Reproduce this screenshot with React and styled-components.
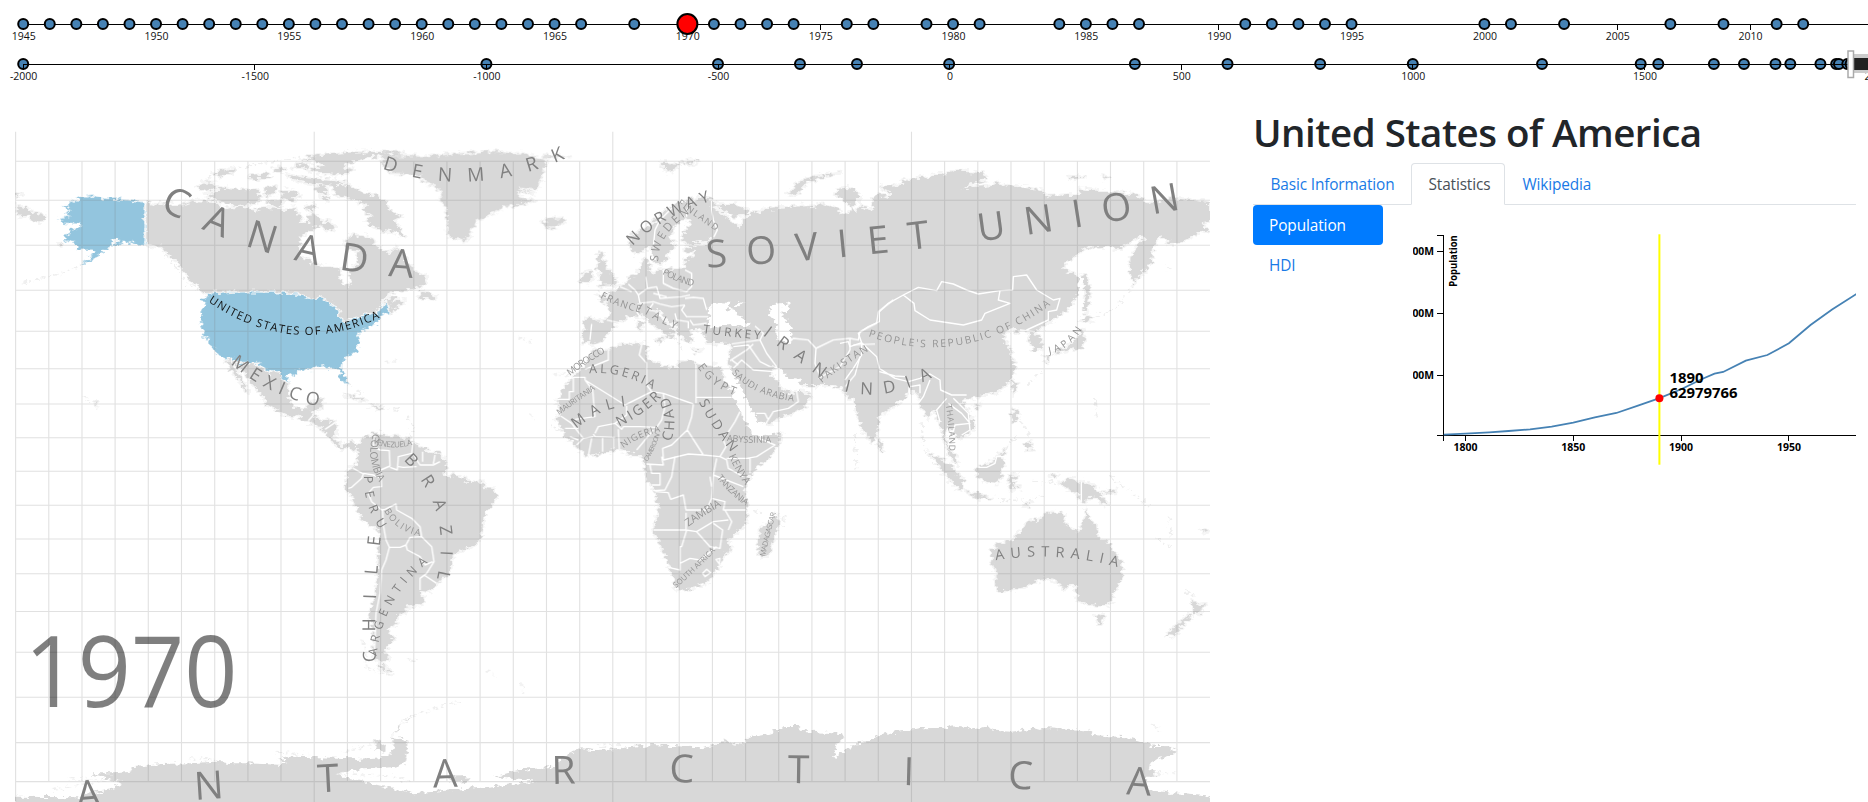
import React from "react";
import styled, { createGlobalStyle } from "styled-components";

const GlobalStyle = createGlobalStyle`
  * { box-sizing: border-box; }
  body {
    margin: 0;
    background: #fff;
    color: #212529;
    font-family: "Open Sans", "Noto Sans", sans-serif;
    overflow: hidden;
  }
`;

const Page = styled.div`
  height: 802px;
  display: flex;
  flex-direction: column;
  overflow: hidden;
`;

const TimelineBar = styled.header`
  flex: 0 0 131px;
`;

const TimelineSvg = styled.svg`
  display: block;
  width: 1868px;
  height: 131px;
`;

const Axis = styled.path`
  fill: none;
  stroke: #000;
  stroke-width: 1;
  shape-rendering: crispEdges;
`;

const AxisLabel = styled.text`
  font-size: 10.5px;
  fill: #111;
  text-anchor: middle;
`;

const EventDot = styled.circle`
  fill: ${(p) => (p.$active ? "#f00" : "steelblue")};
  stroke: #000;
  stroke-width: 2;
`;

const Main = styled.main`
  flex: 1;
  min-height: 0;
  display: grid;
  grid-template-columns: 1196px 603px;
  column-gap: 42px;
  padding-left: 15px;
`;

const MapSvg = styled.svg`
  display: block;
  width: 1196px;
  height: 671px;
`;

const Halo = styled.path`
  fill: none;
  stroke: #f5f5f5;
  stroke-width: 11;
  stroke-linejoin: round;
`;

const Land = styled.path`
  fill: ${(p) => (p.$selected ? "#93c5de" : "#d8d8d8")};
`;

const Sea = styled.path`
  fill: #fff;
`;

const Faint = styled.path`
  fill: none;
  stroke: #efefef;
  stroke-width: 6;
  stroke-dasharray: 14 9 5 12;
`;

const Border = styled.path`
  fill: none;
  stroke: #fff;
  stroke-width: 4.2;
  stroke-linejoin: round;
`;

const GridLine = styled.path`
  fill: none;
  stroke: #777;
  stroke-opacity: 0.22;
  stroke-width: 1.1;
`;

const labelColor = (p) => {
  if (p.$selected) return "#111";
  return p.$minor ? "#959595" : "#808080";
};

const CountryText = styled.text`
  fill: ${labelColor};
`;

const YearText = styled.text`
  font-size: 99px;
  fill: #000;
  fill-opacity: 0.5;
`;

const Panel = styled.aside`
  display: flex;
  flex-direction: column;
  margin-top: -19px;
  min-width: 0;
`;

const Title = styled.h1`
  margin: 0;
  height: 51px;
  font-size: 38.5px;
  font-weight: 600;
  line-height: 41px;
  letter-spacing: -0.5px;
  white-space: nowrap;
`;

const Tabs = styled.nav`
  display: flex;
  height: 42px;
  border-bottom: 1px solid #dee2e6;
`;

const Tab = styled.a`
  width: ${(p) => p.$width}px;
  height: 42px;
  padding: 9px 0 0 16.5px;
  font-size: 15.4px;
  line-height: 24px;
  letter-spacing: -0.14px;
  white-space: nowrap;
  color: ${(p) => (p.$active ? "#495057" : "#1a7ae6")};
  background: ${(p) => (p.$active ? "#fff" : "transparent")};
  border-width: 1px;
  border-style: solid;
  border-color: ${(p) => (p.$active ? "#dee2e6 #dee2e6 #fff" : "transparent")};
  border-radius: 4px 4px 0 0;
`;

const TabBody = styled.section`
  display: flex;
  gap: 29.6px;
`;

const Pills = styled.nav`
  display: flex;
  flex-direction: column;
  flex: 0 0 130px;
`;

const Pill = styled.a`
  height: 40px;
  padding: 9px 16px 7px;
  border-radius: 4px;
  font-size: 15.4px;
  line-height: 24px;
  letter-spacing: -0.1px;
  color: ${(p) => (p.$active ? "#fff" : "#1a7ae6")};
  background: ${(p) => (p.$active ? "#007bff" : "transparent")};
`;

const ChartSvg = styled.svg`
  display: block;
  width: 443.4px;
  height: 280px;
  overflow: hidden;
`;

const ChartText = styled.text`
  font-size: ${(p) => p.$size || 10.5}px;
  font-weight: 700;
  fill: #000;
`;

const Trend = styled.path`
  fill: none;
  stroke: steelblue;
  stroke-width: 1.8;
`;

/* ---------- timelines ---------- */

const recentX = (y) => 23.2 + (y - 1945) * 26.567;
const longX = (y) => 23.2 + (y + 2000) * 0.4632;

const recentEvents = [
  ...Array.from({ length: 22 }, (_, i) => 1945 + i),
  1968, 1971, 1972, 1973, 1974, 1976, 1977, 1979, 1980, 1981, 1984, 1985, 1986, 1987,
  1991, 1992, 1993, 1994, 1995, 2000, 2001, 2003, 2007, 2009, 2011, 2012,
];
const recentTicks = Array.from({ length: 14 }, (_, i) => 1945 + i * 5);
const longEvents = [
  -2000, -1000, -500, -323, -200, -1, 400, 600, 800, 1000, 1279, 1492, 1530, 1650, 1715,
  1783, 1815, 1880, 1914, 1920, 1938, 1945,
];
const longTicks = Array.from({ length: 9 }, (_, i) => -2000 + i * 500);

function Timelines() {
  return (
    <TimelineBar>
      <TimelineSvg viewBox="0 0 1868 131">
        <Axis d={`M23 24.5H1868${recentTicks.map((t) => `M${recentX(t)} 24V30`).join("")}`} />
        {recentTicks.map((t) => (
          <AxisLabel key={t} x={recentX(t) + 0.5} y="40">{t}</AxisLabel>
        ))}
        {recentEvents.map((y) => (
          <EventDot key={y} cx={recentX(y)} cy="24" r="5" />
        ))}
        <EventDot $active cx={recentX(1970)} cy="24" r="10" />
        {longEvents.map((y) => (
          <EventDot key={y} cx={longX(y)} cy="64" r="5" />
        ))}
        <Axis d={`M23 70V64.5H1868${longTicks.map((t) => `M${longX(t)} 64V70`).join("")}`} />
        {longTicks.map((t) => (
          <AxisLabel key={t} x={longX(t) + 0.5} y="80">{t}</AxisLabel>
        ))}
        <rect x="1851" y="54" width="17" height="19" fill="#ccc" />
        <rect x="1853" y="58" width="15" height="12" fill="#222" />
        <rect x="1848" y="51" width="5.5" height="26.5" fill="#fff" stroke="#aaa" strokeWidth="1.5" />
      </TimelineSvg>
    </TimelineBar>
  );
}

/* ---------- map ---------- */

/* Each sheet is digitised at three units per pixel from its own origin. */
const sheets = {
  america: [0, 120],
  greenland: [340, 120],
  europe: [560, 120],
  asia: [840, 120],
  south: [320, 410],
  africa: [540, 330],
  oceania: [840, 330],
};

const sheetTransform = (s) => `translate(${sheets[s][0]} ${sheets[s][1]}) scale(0.33333)`;

const land = [
  ["america", "M438 247L470 255 495 250 520 258 545 256 580 243 610 245 650 250 665 262 680 268 700 262 750 262 765 280 775 268 790 263 830 266 860 271 880 264 900 285 905 300 895 310 925 305 925 285 945 282 965 300 960 320 940 325 925 338 905 345 898 365 896 395 905 412 940 430 965 438 990 440 1018 448 1022 465 1015 478 1032 496 1046 500 1055 485 1050 455 1070 435 1078 415 1074 395 1040 385 1035 365 1060 345 1100 350 1122 362 1125 375 1145 385 1150 398 1170 398 1185 385 1205 392 1215 410 1215 430 1245 445 1250 458 1280 470 1275 490 1240 507 1190 510 1165 522 1148 535 1142 552 1165 535 1185 530 1180 545 1215 540 1195 558 1170 578 1160 548 1145 550 1135 575 1100 582 1060 595 1030 602 1020 600 1015 570 985 545 960 533 935 535 895 522 820 517 740 515 680 518 620 522 605 512 595 500 575 485 562 462 548 448 536 428 520 415 500 395 490 382 460 376 438 372Z"],
  ["america", "M675 720L700 717 720 732 770 729 790 742 810 760 820 752 835 757 850 782 865 790 864 820 870 850 885 865 915 868 935 845 968 838 968 855 955 870 935 875 945 895 975 900 1005 905 1008 940 1000 950 1012 968 1030 978 1050 968 1072 982 1065 990 1050 980 1030 988 1008 975 985 948 965 925 940 912 920 905 900 890 870 888 830 870 795 850 788 825 760 795 740 765 715 737 700 727Z"],
  ["america", "M678 722L692 722 705 745 720 770 745 815 735 812 722 785 708 775 700 755 685 738Z"],
  ["america", "M593 205L610 188 645 187 650 200 620 215ZM622 232L640 212 665 205 700 210 730 205 745 225 760 215 785 228 770 245 720 258 695 252 660 245 640 238ZM640 160L700 145 700 158 660 168ZM750 165L800 160 815 172 780 178 750 175ZM735 215L770 205 775 218 745 225ZM795 205L830 195 825 220 800 228ZM845 215L875 210 900 225 880 240 850 235ZM800 245L850 240 840 258 810 255ZM818 150L850 140 855 150 835 158ZM860 165L920 175 1000 180 1035 190 1000 198 930 190 880 180ZM880 145L900 130 930 132 920 145ZM905 118L960 105 1050 98 1130 96 1210 98 1170 108 1100 112 1060 125 1025 140 1060 150 1030 162 960 160 925 150 970 140 960 125ZM945 200L975 195 985 215 955 222ZM1000 200L1050 195 1075 215 1120 225 1160 250 1165 270 1205 290 1180 300 1195 318 1215 350 1180 335 1150 330 1120 320 1095 305 1115 285 1090 270 1100 255 1065 240 1035 232 1005 222ZM960 312L990 305 1005 325 980 332ZM965 232L985 228 980 245ZM920 255L945 258 940 275 918 270Z"],
  ["america", "M50 258L80 265 100 280 140 288 130 302 108 305 85 290 50 285ZM50 222L70 224 50 227ZM1255 535L1265 515 1290 520 1310 530 1300 540ZM1030 823L1060 828 1100 842 1070 838ZM1110 855L1150 862 1140 868ZM286 852L294 856 290 860ZM176 373L190 370 188 377Z"],
  ["greenland", "M125 120L175 110 215 108 250 112 300 106 380 100 460 94 500 100 560 102 595 115 620 122 610 150 600 165 605 180 590 205 535 200 550 212 585 218 530 215 540 235 582 240 540 255 492 258 470 275 435 288 410 305 392 330 388 350 375 363 360 355 335 355 322 335 325 305 318 280 322 265 300 240 308 220 285 200 255 185 240 170 200 160 150 158ZM608 305L632 295 668 292 672 305 640 326 615 320ZM140 100L200 105 130 115ZM605 108L690 110 620 115Z"],
  ["south", "M0 30L45 35 48 72 20 45 0 40ZM110 110L130 85 155 72 175 68 190 78 235 80 262 84 275 95 300 110 330 125 355 130 375 155 380 180 362 200 395 202 395 192 440 212 480 215 500 235 522 238 530 255 525 275 500 300 490 320 488 350 478 390 460 408 425 420 395 440 392 480 370 500 350 520 330 545 305 540 300 548 312 565 306 582 258 590 255 610 232 612 230 640 210 650 205 665 222 685 200 712 192 730 208 745 185 755 165 750 160 700 165 660 147 620 155 590 165 560 172 520 175 470 178 420 182 370 170 355 128 332 115 300 95 260 78 235 80 210 85 178 100 173 112 160 115 130ZM180 762L195 768 195 782 180 775ZM200 775L218 790 200 790Z"],
  ["africa", "M160 60L205 62 240 45 310 42 325 45 318 70 325 90 370 110 410 115 420 95 450 92 470 105 500 110 540 108 548 125 545 140 580 190 595 235 600 250 625 290 640 305 655 320 725 308 722 330 690 380 650 410 628 440 612 465 616 500 622 520 620 572 605 595 565 625 572 660 545 680 540 705 510 745 490 765 450 775 415 782 405 770 400 740 380 690 365 650 340 600 355 550 355 530 345 485 318 440 315 400 300 375 270 374 260 362 235 356 200 365 180 372 145 378 115 355 85 325 65 300 62 282 50 268 60 240 52 210 65 185 85 160 100 140 130 115 148 85ZM712 550L718 580 700 630 685 675 665 682 652 660 660 632 658 600 690 575Z"],
  ["africa", "M580 40L660 40 685 70 690 120 705 150 718 168 728 182 760 190 775 170 785 182 812 198 795 232 745 252 680 285 652 290 645 262 625 225 600 190 582 150 562 125 578 90Z"],
  ["europe", "M455 240L440 236 410 233 380 243 340 258 300 285 275 315 240 335 212 348 205 375 225 400 255 388 270 378 278 400 285 428 302 430 318 420 325 395 345 380 328 350 345 315 370 292 395 300 390 318 370 340 367 362 385 372 435 363 462 350 430 378 378 382 372 388 385 400 405 395 403 412 378 418 375 440 360 450 310 448 285 458 262 452 272 435 255 415 240 440 232 465 212 468 198 490 175 500 170 515 145 514 142 528 112 522 125 540 145 550 150 570 145 595 115 602 75 595 72 640 68 665 85 662 100 673 125 665 140 640 165 620 160 608 190 605 200 590 215 588 235 590 250 582 265 605 300 628 322 645 335 640 350 635 325 615 295 590 288 570 305 575 322 600 345 612 360 640 368 658 385 668 400 660 385 640 400 628 430 622 436 650 440 668 470 670 495 668 515 678 510 705 505 735 560 740 620 745 650 745 668 765 700 780 722 795 760 795 820 795 850 810 868 838 885 832 890 870 900 900V232L870 250 830 228 832 210 855 203 880 210 900 225 900 290 880 280 860 290 845 288 835 268 790 250 762 258 700 260 650 265 612 268 600 282 585 272 552 298 542 320 520 312 505 300 478 275 450 262 480 255 520 255 565 270 560 285 525 290 490 272Z"],
  ["europe", "M110 402L130 400 125 415 140 425 135 440 155 460 172 480 165 495 130 497 115 500 130 480 115 475 125 455 110 440 115 420ZM68 460L95 455 98 475 85 488 62 485ZM680 220L705 205 710 190 740 175 790 165 840 158 790 172 740 185 725 210 705 225ZM300 130L330 128 355 138 330 155 310 145ZM360 125L420 123 390 132ZM285 660L310 655 300 670ZM312 648L345 640 335 655ZM235 605L248 612 243 630 233 622ZM395 690L425 690 410 698Z"],
  ["asia", "M0 205L30 205 50 215 45 245 25 285 0 280V795L20 805 45 820 45 860 60 910 80 950 95 962 112 945 115 890 145 870 195 832 205 810 235 825 245 860 255 875 262 895 275 872 290 870 285 885 302 910 308 940 312 960 325 1000 352 1035 345 1005 325 985 315 940 322 920 345 940 365 955 375 945 402 930 402 900 380 870 362 845 380 835 410 830 430 825 470 815 500 795 520 765 527 740 510 715 515 695 488 655 495 635 520 620 530 640 550 630 575 640 568 655 580 690 605 690 605 660 585 635 620 610 650 592 680 570 700 545 718 515 718 470 700 462 665 445 690 420 715 400 740 383 800 380 840 385 870 365 900 350 920 350 890 380 872 410 870 450 880 490 905 460 932 430 940 380 960 345 985 368 1015 370 1050 355 1085 332 1105 338 1085 310 1110 305 1110 250 1050 240 1000 235 925 252 910 235 870 222 800 215 722 208 720 225 680 225 625 230 605 210 560 205 520 200 470 190 440 198 367 205 400 188 440 180 430 160 370 155 355 150 320 160 270 170 190 180 185 195 120 200 130 208 150 215 150 235 115 222 95 240 102 270 60 258 45 280Z"],
  ["asia", "M728 470L740 465 750 510 740 575 730 570 735 515ZM738 585L762 595 745 605 722 600ZM728 625L735 655 720 685 690 690 650 698 640 695 680 680 705 665ZM612 705L630 710 622 728ZM685 170L735 172 700 178ZM790 168L812 173 795 178ZM515 785L530 790 522 825ZM405 855L422 853 410 867Z"],
  ["oceania", "M115 328L130 345 125 362 112 355ZM270 370L300 385 335 410 370 455 372 480 340 465 312 430 290 400ZM375 487L415 492 455 505 415 503ZM410 410L440 405 470 385 488 360 500 368 485 380 492 405 475 458 440 455 412 440ZM510 435L535 440 515 450 540 475 520 462 515 485 508 460ZM520 235L535 240 533 265 520 275 515 255ZM555 345L572 335 575 355 562 362ZM628 435L655 437 640 445ZM660 460L690 443 720 455 760 465 775 488 805 525 785 520 765 500 740 502 740 515 722 512 715 495 690 478ZM778 488L830 480 825 487ZM738 535L750 575 768 585 772 620 805 640 820 665 842 690 847 720 838 760 822 785 812 818 780 826 745 822 715 812 705 765 690 762 672 778 655 755 620 745 580 755 550 772 500 782 475 784 468 770 470 735 458 700 452 665 470 645 520 630 545 600 560 580 585 568 595 578 610 555 640 547 672 552 670 575 700 600 720 605 730 580ZM765 855L795 860 778 886ZM1055 812L1065 815 1072 825 1098 820 1080 845 1062 858ZM1045 855L1050 865 1020 895 1005 918 980 915 1010 885ZM1085 600L1100 603 1090 608ZM550 525L575 515 560 528Z"],
];

const unitedStates = [
  "M434 247L400 243 345 236 320 237 280 227 255 232 235 237 215 247 205 260 182 259 212 270 195 283 212 290 172 298 190 308 243 311 238 325 215 328 208 345 190 348 200 364 228 372 232 390 275 388 280 400 262 420 245 431 270 424 300 402 330 382 335 366 350 355 362 362 345 370 335 380 355 375 375 362 395 368 410 374 434 372Z",
  "M622 524L680 519 740 516 820 518 890 523 935 537 962 535 990 550 1015 572 1020 605 1035 607 1060 597 1100 584 1135 577 1148 550 1162 547 1166 575 1140 590 1128 610 1115 615 1110 625 1085 630 1070 648 1082 658 1070 670 1074 688 1040 712 1027 725 1025 745 1038 775 1038 795 1022 775 1018 752 1000 742 980 745 975 738 940 742 935 750 905 745 880 765 860 768 868 787 850 780 835 755 820 750 810 758 790 740 770 727 740 730 720 730 700 715 675 718 645 695 628 670 628 658 612 652 603 610 605 570 620 550 600 542 602 533 618 538Z",
];

const seas = [
  ["europe", "M440 612L448 590 440 568 455 555 480 550 512 552 498 565 525 573 538 590 578 612 545 622 510 612 480 618 455 625ZM515 558L552 545 535 562ZM624 572L640 555 688 550 690 572 665 575 665 592 690 610 700 628 690 635 697 668 670 670 650 650 648 615 635 595ZM640 742L660 745 690 775 718 780 722 795 720 815 705 810 680 800 655 765Z"],
  ["africa", "M545 112L572 112 592 150 622 215 655 275 730 312 660 318 640 308 600 245 578 190Z"],
  ["asia", "M715 465L728 470 728 590 715 600Z"],
];

const faint = [
  ["america", "M65 488L120 478 200 455 250 432M245 830L300 855M470 375L520 430 560 490 600 515M1040 785L1090 825M1140 865L1200 870M1225 890L1240 930 1225 955M620 175L760 135 900 110"],
  ["greenland", "M530 650L575 665M640 765L690 765M565 880L590 900M140 725L180 720"],
  ["asia", "M770 590L830 560 880 495M560 800L605 750M765 840L770 890M540 900L575 950M980 440L990 450"],
  ["oceania", "M245 280L250 350 280 395M480 510L550 512 620 495M580 455L650 460M810 440L850 470 930 530M985 560L995 620M950 625L990 650M1040 780L1060 800M45 310L50 430M495 360L530 310"],
  ["south", "M50 95L100 95M265 20L280 50M265 750L300 745M500 780L520 795M605 820L612 855M130 690L140 770 210 800"],
  ["africa", "M60 300L30 290M730 560L735 600M640 540L670 555M400 20L430 60"],
];

const borders = [
  ["america", "M436 246V372M925 902L945 880 945 870M975 928L1005 908"],
  ["south", "M85 235L95 232 125 205 130 192 100 175M165 75L160 110 180 120 208 122 210 168 182 180 185 230 160 232 145 250 155 275 185 300 195 298 228 282 230 300 275 325 300 350 305 380 270 382 258 405 240 412 208 412 198 390 190 345 188 300M130 190L160 195 185 205M210 172L232 180 235 140 275 130 280 95M278 130L300 165 340 165 360 155M308 125L308 155M345 135L340 162M235 170L250 172 290 170M258 405L262 420 300 440 315 465 338 455M305 380L335 410 342 455 320 490 300 505 300 540M312 495L350 520M208 412L198 450 185 480 180 550 168 610 165 690 162 750"],
  ["africa", "M135 118L205 90 205 62M305 45L298 75 320 100 320 165 335 185M135 150L255 225 335 185 370 190 460 222M468 105V220M468 202H575M135 150V142H100V185H88V208H52M135 150L158 180 165 260 105 268M62 258L95 280 110 300M115 295H75M165 310L175 290 225 280 260 255V228M225 280L245 298 250 290 300 290 350 292 365 270 375 230 370 190M225 322L165 320 160 312M110 300L130 325 160 320M188 320V365M130 325L110 345M155 325L145 378M220 320V358M235 298L238 358M340 300L290 360M90 320L115 330M460 222L455 260 442 300 395 345 368 355 370 390M442 300L490 375 540 380 558 350 550 330 585 275 600 245M370 390L445 372 490 375M318 402L370 405 365 380M330 405L335 430 360 430V465L335 465M405 380L395 440 375 480 340 482M345 485L385 488 392 508 430 495 438 540 455 540M540 380L560 390 565 415 610 440M530 385L520 435 610 470M520 435L515 505 555 515 550 540 618 540M515 505L500 540 455 540M438 548V600L340 600M438 600L470 605 520 575 565 570M440 600L425 650H420V720L385 712M420 700L450 685 480 690 530 650M470 605L510 650 540 655 548 600 520 580M555 540L575 575 565 600M488 730L500 718 512 728 495 740ZM528 688L540 685 538 702ZM560 385L620 385 650 380 705 345 650 322M630 385V430M510 440L515 470M580 50L625 45 660 95 690 110M580 115L605 90 640 120 700 125M672 290L700 245 745 235 775 215 770 185M648 250L675 250 685 270"],
  ["europe", "M455 240L455 270 460 300 472 330 462 350M405 235L380 270 380 290M338 262L300 300 285 330 280 380M310 448L310 490 340 505 380 515 395 500 395 460 375 450M258 470L262 505 290 500 300 535 365 530 390 525M262 505L235 525 240 550 280 545 300 552 335 560 375 555M280 520L320 530M205 492L225 510 235 525M180 500L215 515M375 535L400 532 430 535 440 570M375 555L365 570 380 590 445 590M280 550L265 570 295 575M345 580L350 600 385 605 385 625M390 600L400 615 440 610M95 612L90 660M140 600L185 610M235 550L230 575 240 590M585 618L610 640 600 660 515 672M600 660L620 700 650 740M510 722L560 690 580 672M535 735L515 720M690 665L700 655 745 660 768 685 765 730 780 770M768 685L820 660 870 655 870 690 840 740 775 775M870 655L895 660 900 635 950 610 955 575 1000 540M880 675L945 672M855 800L885 765 900 710"],
  ["asia", "M0 670L25 665 30 680 65 668 55 640 85 620 118 605 118 575 145 550 190 525 235 502 290 512 305 485 340 492 380 510 415 522 480 512 518 510 520 470 560 465 590 510 640 540 660 535 650 570 625 575 625 600 560 630M190 525L222 550 225 572 270 600 370 615 425 600 435 580 510 550 475 540 480 512M65 668L110 710 118 745 165 775 205 785 240 775 270 762 300 780 302 810 335 825 380 825M65 668L65 705 40 745 15 780M118 755L165 768 200 770M205 785L210 835M210 800L240 795 240 820M270 780L250 830 235 850M320 835L290 870 300 905M325 850L365 880 390 910 345 915 340 935M340 835L385 880 390 930 365 945M540 630L585 635"],
  ["oceania", "M415 412L440 412 465 400 470 380 495 380M724 455V515"],
];

const antarcticWest = "M39 606V590L200 592 230 580 265 572 305 555 310 550 225 520 290 520 330 515 335 502 410 492 480 490 545 485 590 490 620 490 720 495 725 488 705 478 730 470 800 472 890 475 900 480 960 475 990 460 998 435 990 412 1008 415 1030 425 1030 470 1025 490 990 502 890 510 850 525 920 545 1000 568 1045 580 1100 575 1200 565 1355 545 1250 530 1300 512 1400 500 1420 475 1470 445 1500 450 1575 448V606ZM950 415L975 435 970 455 950 450ZM992 410L1000 385 1030 355 1060 340 1020 365 1000 395ZM1130 530L1185 528 1180 543 1140 545Z";
const antarcticEast = "M-10 450L30 450 60 443 130 435 215 440 250 442 310 430 308 415 325 428 355 435 362 415 430 400 432 390 450 390 460 378 490 378 500 392 605 403 600 430 585 435 590 450 580 468 590 470 640 430 660 428 690 408 740 392 800 385 860 383 880 376 940 387 965 376 980 392 1025 395 1080 385 1095 390 1110 381 1220 392 1225 405 1310 412 1360 430 1375 438 1410 438 1435 455 1420 465 1390 475 1370 490 1365 510 1385 515 1375 530 1355 530 1360 570 1420 578 1518 590V606H-10Z";

const labels = [
  ["america", "CANADA", 39, [478, 266, 840, 409, 1242, 474]],
  ["europe", "SOVIET UNION", 38.5, [440, 443, 1150, 378, 1870, 267]],
  ["greenland", "DENMARK", 19, [127, 146, 400, 184, 678, 114]],
  ["america", "UNITED STATES OF AMERICA", 11.3, [625, 545, 880, 643, 1142, 592]],
  ["america", "MEXICO", 18, [691, 731, 814, 811, 956, 859]],
  ["europe", "MOROCCO", 9.5, [30, 768, 80, 731, 137, 697]],
  ["europe", "ALGERIA", 12.5, [88, 760, 185, 768, 278, 808]],
  ["africa", "MAURITANIA", 7.8, [57, 255, 112, 215, 167, 178]],
  ["africa", "MALI", 15, [108, 297, 180, 250, 258, 229]],
  ["africa", "NIGER", 14, [237, 290, 306, 250, 365, 202]],
  ["africa", "CHAD", 14, [392, 335, 403, 270, 385, 200]],
  ["africa", "SUDAN", 13.5, [476, 216, 520, 292, 574, 368]],
  ["africa", "EGYPT", 11.5, [472, 111, 520, 162, 584, 196]],
  ["africa", "KENYA", 10.5, [566, 378, 588, 422, 616, 466]],
  ["africa", "ABYSSINIA", 9, [560, 333, 625, 338, 694, 338]],
  ["africa", "NIGERIA", 9.3, [250, 355, 300, 325, 362, 305]],
  ["africa", "CAMEROON", 6.3, [322, 395, 342, 357, 360, 312]],
  ["africa", "TANZANIA", 9, [530, 443, 570, 488, 618, 527]],
  ["africa", "ZAMBIA", 10.8, [445, 590, 492, 558, 545, 527]],
  ["africa", "MADAGASCAR", 7.5, [675, 680, 690, 615, 708, 548]],
  ["africa", "SOUTH AFRICA", 7.8, [408, 775, 468, 720, 527, 662]],
  ["africa", "SAUDI ARABIA", 9.3, [575, 130, 655, 185, 762, 214]],
  ["europe", "TURKEY", 12, [428, 639, 515, 650, 602, 658]],
  ["europe", "IRAN", 17, [608, 645, 690, 706, 785, 776]],
  ["europe", "PAKISTAN", 10.3, [785, 790, 855, 737, 927, 692]],
  ["asia", "INDIA", 17, [12, 813, 140, 820, 278, 772]],
  ["asia", "PEOPLE'S REPUBLIC OF CHINA", 10.3, [85, 649, 365, 674, 634, 553]],
  ["asia", "JAPAN", 10, [628, 702, 682, 678, 726, 628]],
  ["oceania", "THAILAND", 8.5, [317, 225, 325, 290, 328, 364]],
  ["oceania", "AUSTRALIA", 14.5, [467, 691, 650, 681, 834, 712]],
  ["europe", "NORWAY", 16, [218, 378, 320, 300, 452, 243]],
  ["europe", "SWEDEN", 11.5, [294, 425, 320, 345, 390, 280]],
  ["europe", "FINLAND", 9, [352, 252, 410, 293, 468, 333]],
  ["europe", "POLAND", 9.2, [306, 462, 350, 483, 400, 499]],
  ["europe", "FRANCE", 10, [120, 533, 180, 560, 242, 578]],
  ["europe", "ITALY", 11, [232, 568, 288, 600, 347, 628]],
  ["south", "COLOMBIA", 10.3, [160, 70, 152, 145, 178, 217]],
  ["south", "VENEZUELA", 8, [158, 98, 215, 112, 278, 104]],
  ["south", "BRAZIL", 17, [250, 150, 350, 312, 350, 508]],
  ["south", "PERU", 12.5, [132, 197, 142, 280, 180, 358]],
  ["south", "BOLIVIA", 9.3, [192, 302, 236, 352, 300, 378]],
  ["south", "CHILE", 18, [168, 756, 168, 570, 183, 378]],
  ["south", "ARGENTINA", 12, [170, 738, 218, 580, 325, 457]],
];

/* Control point of the quadratic curve that passes through the label's middle. */
function curve([x0, y0, xm, ym, x1, y1]) {
  const cx = 2 * xm - (x0 + x1) / 2;
  const cy = 2 * ym - (y0 + y1) / 2;
  let length = 0;
  let px = x0;
  let py = y0;
  for (let i = 1; i <= 40; i++) {
    const t = i / 40;
    const x = (1 - t) * (1 - t) * x0 + 2 * t * (1 - t) * cx + t * t * x1;
    const y = (1 - t) * (1 - t) * y0 + 2 * t * (1 - t) * cy + t * t * y1;
    length += Math.hypot(x - px, y - py);
    px = x;
    py = y;
  }
  return { d: `M${x0} ${y0}Q${cx} ${cy} ${x1} ${y1}`, length };
}

function CurvedLabel({ id, text, size, points, selected, minor }) {
  const { d, length } = curve(points);
  return (
    <>
      <path id={id} d={d} fill="none" />
      <CountryText $selected={selected} $minor={minor} fontSize={size}>
        <textPath href={`#${id}`} textLength={length * 0.995} lengthAdjust="spacing">{text}</textPath>
      </CountryText>
    </>
  );
}

const parallels = [161.3, 200.3, 245.3, 290.3, 331.3, 368.7, 404, 437.7, 471.3, 505.3, 539, 573.7, 611.5, 652.3, 697.3, 742.6, 781.6];

const gridPath =
  parallels.map((y) => `M15.6 ${y}H1210`).join("") +
  Array.from({ length: 36 }, (_, i) => {
    const x = (15.6 + i * 33.18).toFixed(1);
    return i % 9 === 0 ? `M${x} 131.7V802` : `M${x} 161.3V781.6`;
  }).join("");

const layer = (list, Shape) =>
  list.map(([sheet, d], i) => <Shape key={i} d={d} transform={sheetTransform(sheet)} />);

function WorldMap() {
  return (
    <MapSvg viewBox="15 131 1196 671">
      <defs>
        {/* Ragged edge for the coastlines */}
        <filter id="coast" filterUnits="userSpaceOnUse" x="15" y="125" width="1196" height="690" colorInterpolationFilters="sRGB">
          <feTurbulence type="fractalNoise" baseFrequency="0.16 0.28" numOctaves="2" seed="7" result="noise" />
          <feDisplacementMap in="SourceGraphic" in2="noise" scale="9" xChannelSelector="R" yChannelSelector="G" />
        </filter>
        <clipPath id="sheet-edge">
          <path d="M15 125H1210V815H15Z" />
        </clipPath>
      </defs>
      <g clipPath="url(#sheet-edge)">
        <g filter="url(#coast)">
          {layer(land, Halo)}
          {layer(faint, Faint)}
          {layer(land, Land)}
          <g transform="translate(0 600) scale(0.39541 0.33333)">
            <Land d={antarcticWest} />
            <Land d="M39 600H1575V640H39Z" />
            <Faint d="M130 570L250 545M175 535L300 545M480 475L560 480M700 455L780 465M870 455L950 430M850 520L1000 530 1040 545M1060 340L1170 300" />
          </g>
          <g transform="translate(600 600) scale(0.40177 0.33333)">
            <Land d={antarcticEast} />
            <Land d="M-10 600H1530V640H-10Z" />
            <Faint d="M1385 520L1435 520M1375 375L1395 395M0 437L60 435" />
          </g>
          {layer(seas, Sea)}
          <g transform={sheetTransform("america")}>
            {unitedStates.map((d, i) => (
              <Land key={i} $selected d={d} />
            ))}
            <Border d="M620 522L680 517 740 514 820 516 890 521 935 535 962 533 990 548 1017 570 1021 603M1035 605L1060 596 1100 583 1135 575 1147 549 1162 545 1168 575M675 720L700 717 720 732 770 729 790 742 810 760 820 752 835 757 850 782 866 790" />
          </g>
        </g>
        {layer(borders, Border)}
      </g>
      <GridLine d={gridPath} />
      {labels.map(([sheet, text, size, points]) => (
        <g key={text} transform={sheetTransform(sheet)}>
          <CurvedLabel
            id={`label-${text.replace(/[^A-Z]/g, "")}`}
            text={text}
            size={size * 3}
            points={points}
            minor={size < 12}
            selected={text.startsWith("UNITED")}
          />
        </g>
      ))}
      <CurvedLabel id="label-ANTARCTICA" text="ANTARCTICA" size={39} points={[77, 809, 617, 783, 1156, 796]} />
      <YearText x="24.5" y="707" textLength="213" lengthAdjust="spacingAndGlyphs">1970</YearText>
    </MapSvg>
  );
}

/* ---------- population chart ---------- */

const chartX = (y) => 1465 + (y - 1800) * 2.157;
const population = [
  [1790, 434.7], [1800, 433.7], [1811, 432.3], [1820, 431], [1830, 429.3], [1840, 426.7],
  [1850, 422.7], [1860, 417.3], [1870, 413], [1880, 405.7], [1890, 398.2], [1900, 389.3],
  [1910, 378.7], [1915.5, 373.7], [1919.5, 372], [1930, 360.7], [1940, 355], [1950, 343.3],
  [1960, 325], [1970, 309.5], [1982, 293],
];

function PopulationChart() {
  return (
    <ChartSvg viewBox="1412.6 205 443.4 280">
      <Axis d="M1437 235.5H1443.5V435.5H1437M1437 251.5H1443M1437 313.5H1443M1437 375.5H1443" />
      <Axis d={`M1443.5 441V435.5H1870${[1800, 1850, 1900, 1950].map((t) => `M${chartX(t)} 435V441`).join("")}`} />
      {[["300M", 254.8], ["200M", 317], ["100M", 379]].map(([t, y]) => (
        <ChartText key={t} x="1433.6" y={y} textAnchor="end" textLength="27.5" lengthAdjust="spacingAndGlyphs">{t}</ChartText>
      ))}
      {[1800, 1850, 1900, 1950].map((t) => (
        <ChartText key={t} x={chartX(t)} y="451" textAnchor="middle">{t}</ChartText>
      ))}
      <ChartText transform="translate(1456.5 235.3) rotate(-90)" textAnchor="end" textLength="51.5" lengthAdjust="spacingAndGlyphs">Population</ChartText>
      <Trend d={`M${population.map(([x, y]) => `${chartX(x)} ${y}`).join("L")}`} />
      <path d="M1659 234.3V464.7" stroke="#ff0" strokeWidth="2" />
      <circle cx="1659" cy="398.2" r="4" fill="#f00" />
      <ChartText $size={14.9} x="1669" y="383.3">1890</ChartText>
      <ChartText $size={14.9} x="1669" y="398.4">62979766</ChartText>
    </ChartSvg>
  );
}

export default function App() {
  return (
    <Page>
      <GlobalStyle />
      <Timelines />
      <Main>
        <WorldMap />
        <Panel>
          <Title>United States of America</Title>
          <Tabs>
            <Tab $width={158}>Basic Information</Tab>
            <Tab $width={94} $active>Statistics</Tab>
            <Tab $width={104}>Wikipedia</Tab>
          </Tabs>
          <TabBody>
            <Pills>
              <Pill $active>Population</Pill>
              <Pill>HDI</Pill>
            </Pills>
            <PopulationChart />
          </TabBody>
        </Panel>
      </Main>
    </Page>
  );
}
